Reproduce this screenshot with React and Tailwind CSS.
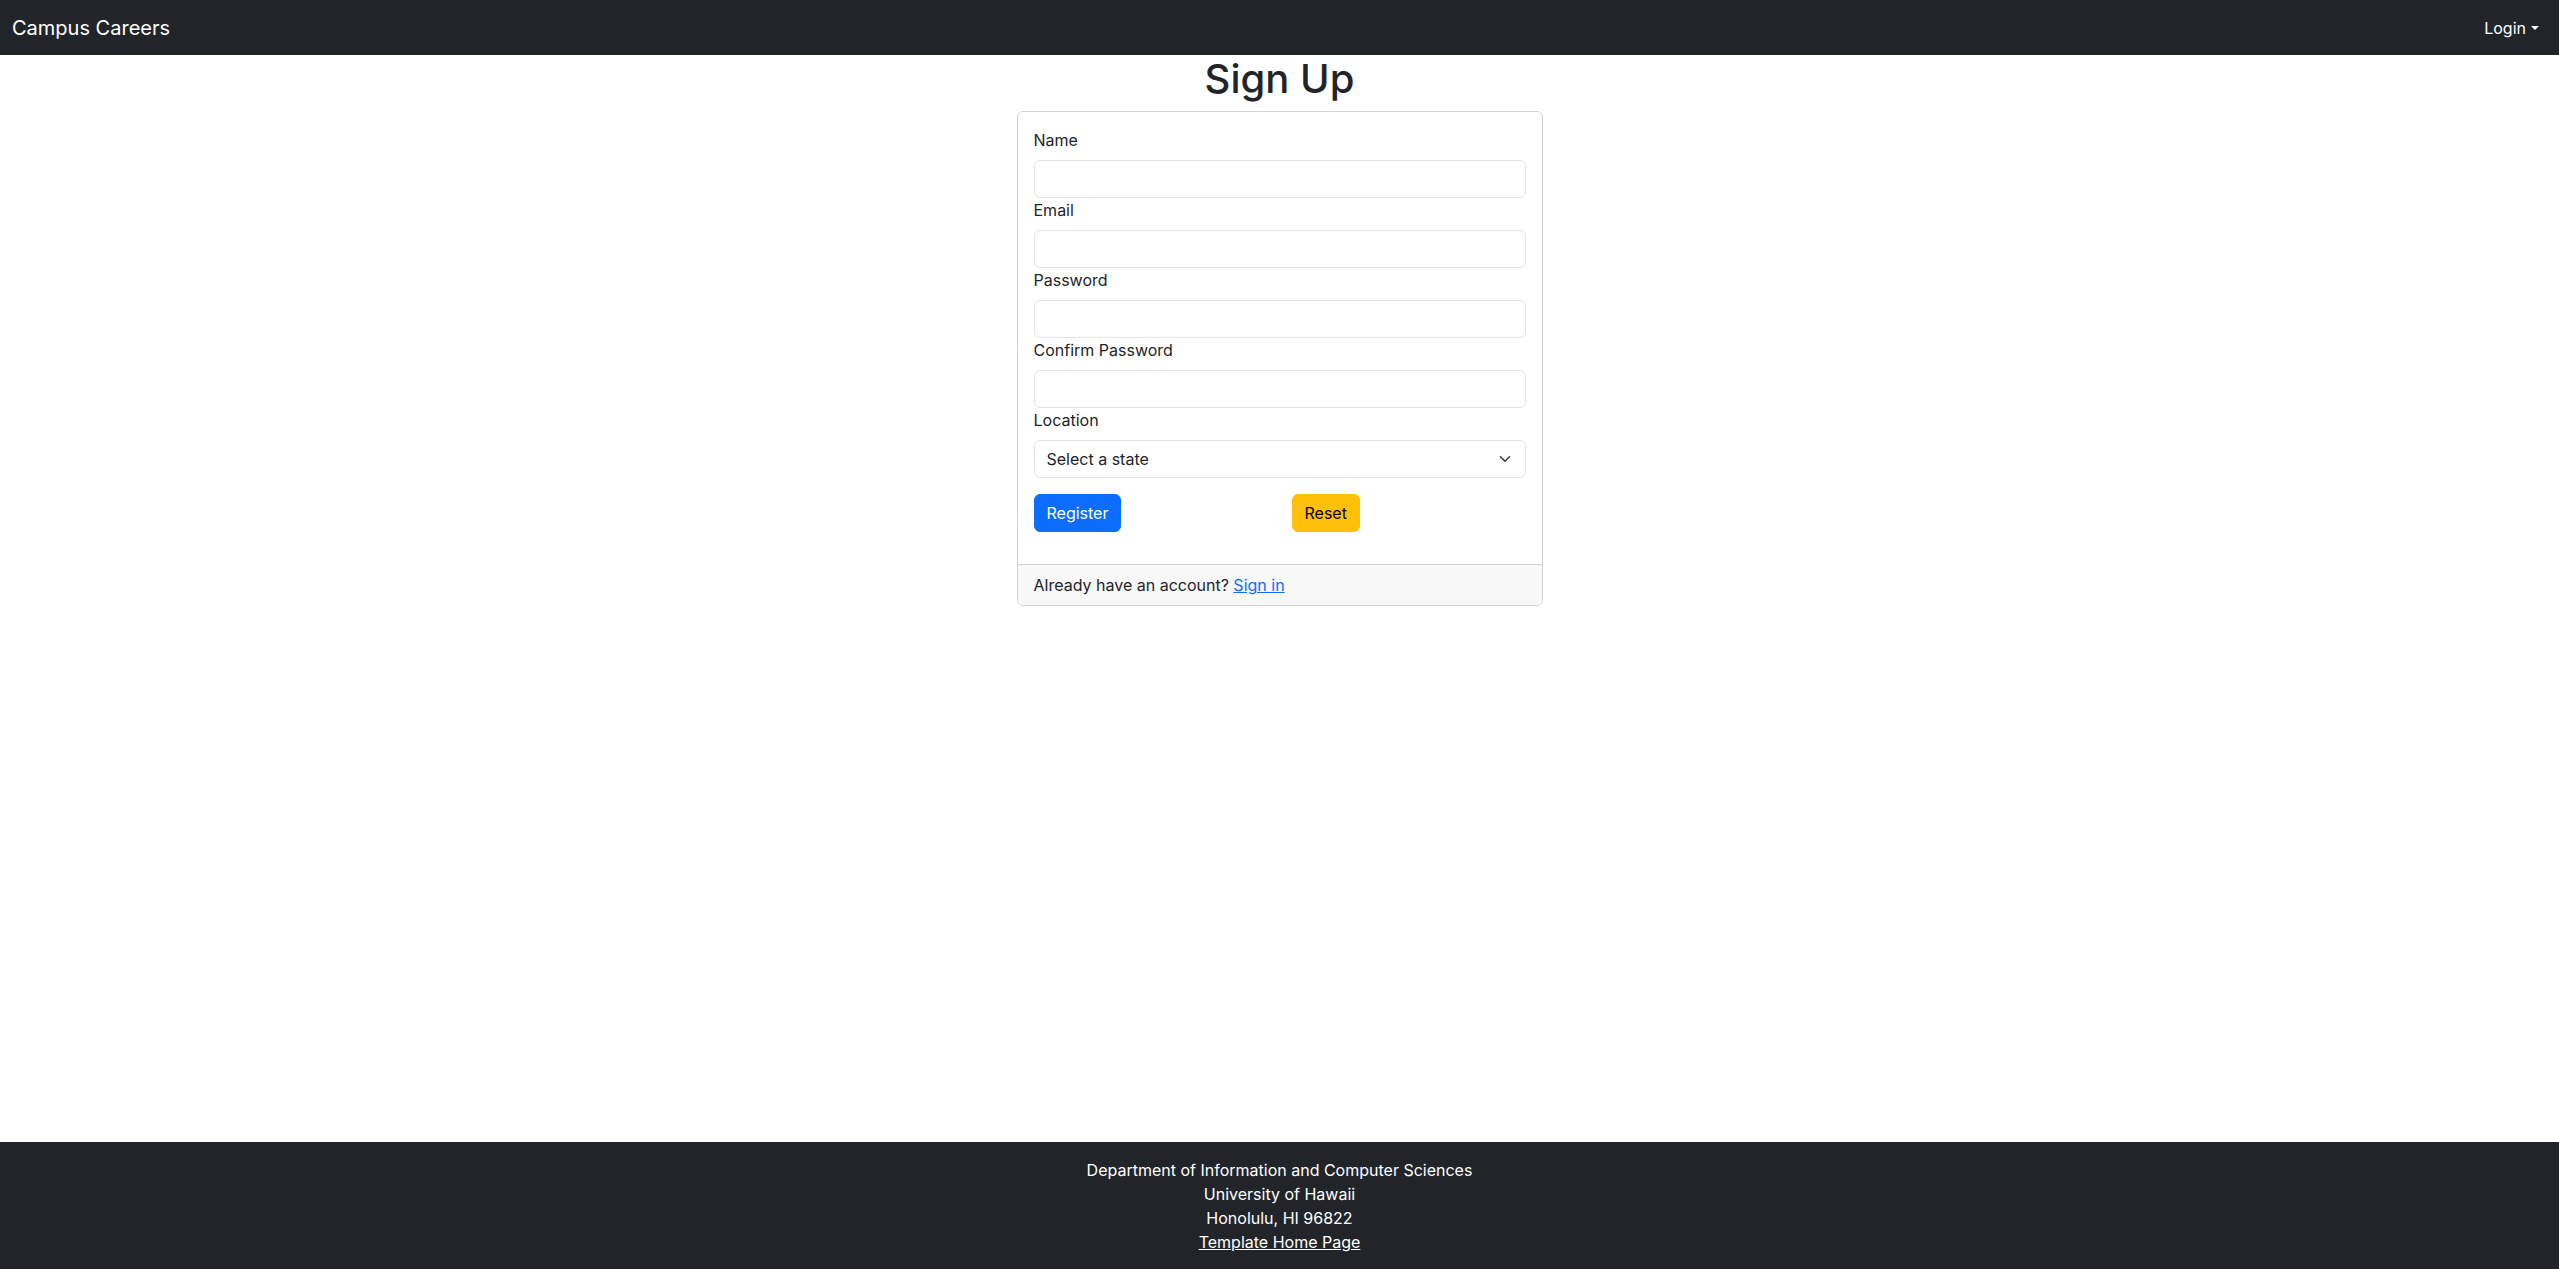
import React from "react";

const fields = [
  { label: "Name", type: "text" },
  { label: "Email", type: "email" },
  { label: "Password", type: "password" },
  { label: "Confirm Password", type: "password" },
];

const Navbar = () => (
  <nav className="h-[55px] bg-[#212529] px-3 flex items-center justify-between">
    <a href="#" className="text-white text-[20px] leading-[30px]">
      Campus Careers
    </a>
    <button className="flex items-center px-2 text-white text-base leading-6">
      Login
      <span className="ml-[5px] w-0 h-0 border-t-[4px] border-t-white border-x-[4px] border-x-transparent" />
    </button>
  </nav>
);

const SignUp = () => (
  <div className="flex-1">
    <h1 className="text-center text-[40px] leading-[48px] font-medium mb-2">Sign Up</h1>
    <div className="w-[526px] mx-auto border border-[#d3d4d5] rounded-[6px] overflow-hidden">
      <div className="p-4">
        {fields.map((f) => (
          <div key={f.label}>
            <label className="block leading-6 mb-2">{f.label}</label>
            <input
              type={f.type}
              className="block w-full h-[38px] px-3 border border-[#dee2e6] rounded-[6px] outline-none"
            />
          </div>
        ))}
        <div>
          <label className="block leading-6 mb-2">Location</label>
          <div className="relative h-[38px] border border-[#dee2e6] rounded-[6px] flex items-center pl-3">
            <span>Select a state</span>
            {/* select chevron */}
            <svg
              className="absolute right-[14px] top-1/2 -translate-y-1/2"
              width="12"
              height="12"
              viewBox="0 0 16 16"
              fill="none"
              stroke="#343a40"
              strokeWidth="2"
              strokeLinecap="round"
              strokeLinejoin="round"
            >
              <path d="m2 5 6 6 6-6" />
            </svg>
          </div>
        </div>
        <div className="grid grid-cols-2 -mx-3 mt-4 mb-4">
          <div className="px-3">
            <button className="h-[38px] px-3 rounded-[6px] border border-[#0d6efd] bg-[#0d6efd] text-white">
              Register
            </button>
          </div>
          <div className="px-3">
            <button className="h-[38px] px-3 rounded-[6px] border border-[#ffc107] bg-[#ffc107] text-black">
              Reset
            </button>
          </div>
        </div>
      </div>
      <div className="border-t border-[#d3d4d5] bg-[#f8f8f8] px-4 py-2 leading-6">
        Already have an account?{" "}
        <a href="#" className="text-[#0d6efd] underline">
          Sign in
        </a>
      </div>
    </div>
  </div>
);

const Footer = () => (
  <footer className="bg-[#212529] py-4 text-center text-white leading-6">
    Department of Information and Computer Sciences
    <br />
    University of Hawaii
    <br />
    Honolulu, HI 96822
    <br />
    <a href="#" className="text-white underline">
      Template Home Page
    </a>
  </footer>
);

export default function App() {
  return (
    <div className="min-h-[1270px] flex flex-col bg-white text-[#212529] text-base font-['Inter','Liberation_Sans',sans-serif]">
      <Navbar />
      <SignUp />
      <Footer />
    </div>
  );
}
